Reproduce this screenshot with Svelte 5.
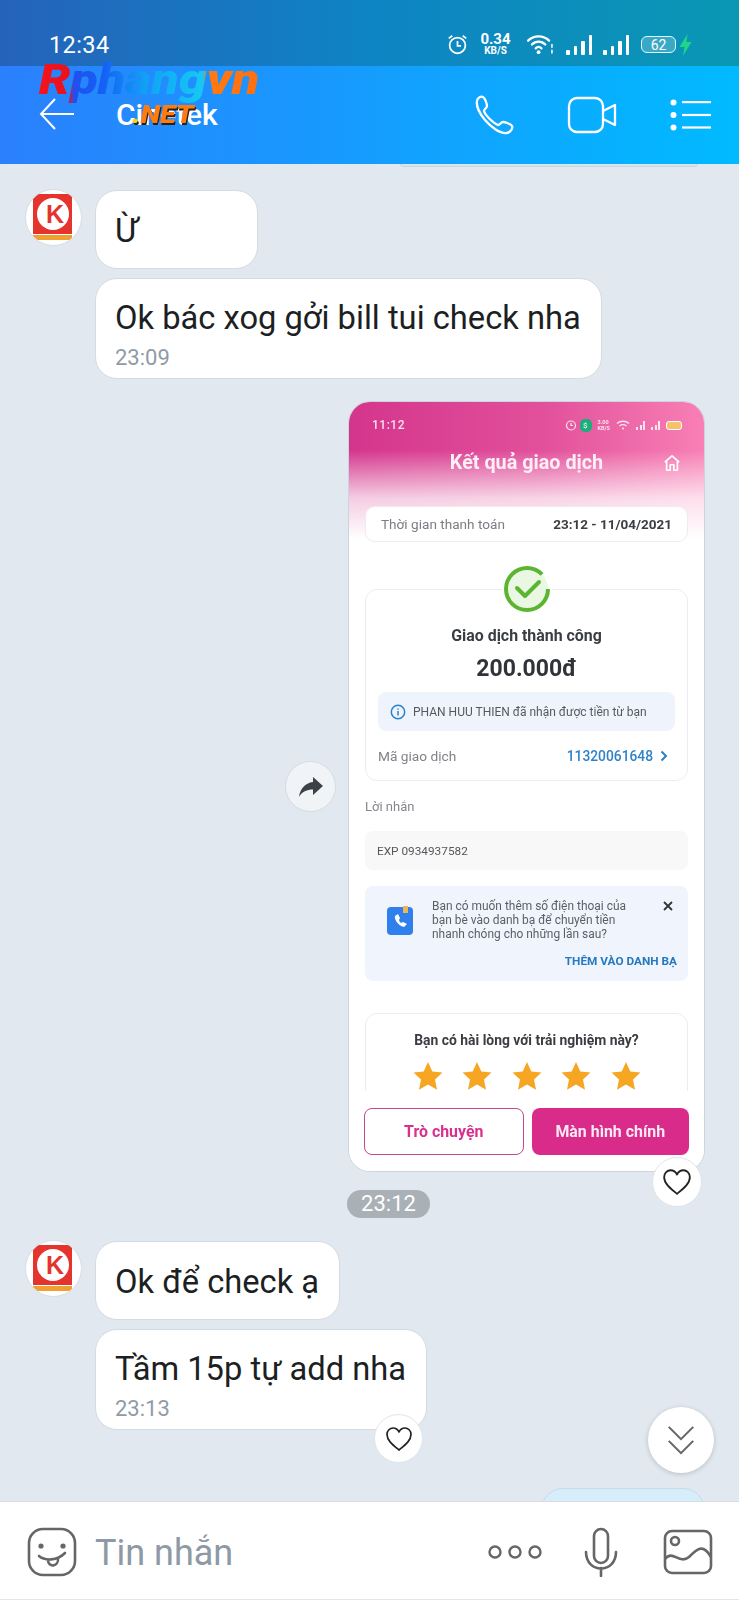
<script lang="ts">
	const stars = [0, 1, 2, 3, 4];
</script>

{#snippet avatar()}
	<div class="avatar">
		<svg viewBox="0 0 57 57" width="57" height="57">
			<rect x="8" y="5" width="39" height="40" fill="#e5342d" />
			<rect x="8" y="46" width="39" height="5" fill="#f0a030" />
			<circle cx="28" cy="25" r="16" fill="#fff" />
			<text x="30" y="34" class="logo-k">K</text>
		</svg>
	</div>
{/snippet}

{#snippet heart(size)}
	<svg viewBox="0 0 28 26" width={size} height={size} fill="none" stroke="#222" stroke-width="1.7" stroke-linejoin="round">
		<path d="M14 24 C8 19 2 14.5 2 8.5 C2 4.5 5 2 8 2 C10.5 2 12.8 3.4 14 6 C15.2 3.4 17.500 2 20 2 C23 2 26 4.500 26 8.500 C26 14.500 20 19 14 24Z" />
	</svg>
{/snippet}

<div class="phone">
	<div class="status">
		<span class="clock">12:34</span>
		<div class="status-icons">
			<svg viewBox="0 0 24 24" width="21" height="21" fill="none" stroke="#fff" stroke-width="2">
				<circle cx="12" cy="13" r="9" />
				<path d="M12 8 V13.500 H16 M2 5 L6 2 M22 5 L18 2" />
			</svg>
			<div class="speed"><b>0.34</b><small>KB/S</small></div>
			<svg class="wifi" viewBox="0 0 30 22" width="29" height="21" fill="none" stroke="#fff" stroke-width="2.400" stroke-linecap="round">
				<path d="M2 7 C8 1 18 1 24 7 M6 11 C10 7 16 7 20 11 M10 15 C12 13 14 13 16 15" />
				<circle cx="13" cy="19" r="2" fill="#fff" stroke="none" />
				<path d="M27 11 V14 M27 17 V20" stroke-width="1.600" />
			</svg>
			<div class="signal">
				<i style="height: 5px"></i><i style="height: 9px"></i><i style="height: 14px"></i><i style="height: 20px"></i>
			</div>
			<div class="signal">
				<i style="height: 5px"></i><i style="height: 9px"></i><i style="height: 14px"></i><i style="height: 20px"></i>
			</div>
			<div class="battery"><span>62</span></div>
			<svg class="bolt" viewBox="0 0 12 22" width="13" height="22"><path d="M8 0 L0 13 H5 L3.500 22 L12 8 H7Z" fill="#22d48a" /></svg>
		</div>
	</div>

	<header class="bar">
		<svg class="back" viewBox="0 0 36 32" width="36" height="32" fill="none" stroke="#fff" stroke-width="2">
			<path d="M35 16 H2 M16 1 L2 16 L16 31" />
		</svg>
		<h1>Cinetek</h1>
		<div class="bar-actions">
			<svg viewBox="0 0 40 40" width="40" height="40" fill="none" stroke="#fff" stroke-width="2.300" stroke-linejoin="round">
				<path d="M3 6 C3 3 7 1 9 2 C11 3 13 9 13 11 C13 13 10 14 10 16 C11 20 19 28 24 30 C26 30 27 27 29 27 C31 27 37 29 38 31 C39 33 37 37 33 38 C26 39 17 32 11 25 C6 19 2 11 3 6Z" />
			</svg>
			<svg viewBox="0 0 50 38" width="50" height="38" fill="none" stroke="#fff" stroke-width="2.300" stroke-linejoin="round">
				<rect x="2" y="2" width="34" height="34" rx="8" />
				<path d="M36 15 L48 9 V29 L36 23" />
			</svg>
			<svg viewBox="0 0 42 32" width="42" height="32" fill="#fff">
				<circle cx="3.500" cy="3.500" r="3" /><circle cx="3.500" cy="16" r="3" /><circle cx="3.500" cy="28.500" r="3" />
				<rect x="12" y="2" width="29" height="2.200" /><rect x="12" y="14.900" width="29" height="2.200" /><rect x="12" y="27.400" width="29" height="2.200" />
			</svg>
		</div>
	</header>

	<main class="chat">
		<div class="peek-top"></div>

		<div class="group first">
			{@render avatar()}
			<div class="stack">
				<div class="bubble short">Ừ</div>
				<div class="bubble">
					Ok bác xog gởi bill tui check nha
					<time>23:09</time>
				</div>
			</div>
		</div>

		<div class="sent">
			<button class="forward" aria-label="Chuyển tiếp">
				<svg viewBox="0 0 26 22" width="26" height="22"><path d="M15 1 L25 10 L15 19 V13.500 C9 13.500 4 15.500 1 21 C2 13 7 7 15 6Z" fill="#3c4148" /></svg>
			</button>
			<div class="shot">
				<div class="shot-inner">
					<div class="shot-hero">
						<div class="shot-status">
							<span>11:12</span>
							<div class="shot-status-icons">
								<svg viewBox="0 0 12 12" width="12" height="12" fill="none" stroke="#fbe4ef" stroke-width="1.200"><circle cx="6" cy="6.500" r="4.500" /><path d="M6 4 V6.500 H8" /></svg>
								<i class="shield">$</i>
								<small>3.00<br />KB/S</small>
								<svg viewBox="0 0 14 10" width="14" height="11" fill="none" stroke="#fbe4ef" stroke-width="1.300"><path d="M1 3 C4 0 10 0 13 3 M3.500 5.500 C5.500 4 8.500 4 10.500 5.500 M6 8 L8 8" /></svg>
								<div class="mini-signal"><i style="height: 3px"></i><i style="height: 5px"></i><i style="height: 9px"></i></div>
								<div class="mini-signal"><i style="height: 3px"></i><i style="height: 5px"></i><i style="height: 9px"></i></div>
								<i class="mini-batt"></i>
							</div>
						</div>
						<div class="shot-title">
							<span>Kết quả giao dịch</span>
							<svg viewBox="0 0 20 20" width="18" height="18" fill="none" stroke="#fff" stroke-width="1.800" stroke-linejoin="round"><path d="M2 9 L10 2 L18 9 M4 8 V18 H8 V12 H12 V18 H16 V8" /></svg>
						</div>
					</div>

					<div class="pay-time">
						<span>Thời gian thanh toán</span>
						<b>23:12 - 11/04/2021</b>
					</div>

					<section class="result">
						<div class="check">
							<svg viewBox="0 0 50 50" width="50" height="50" fill="none">
								<circle cx="25" cy="25" r="25" fill="#fff" />
								<circle cx="25" cy="25" r="21" fill="#eaf7e2" stroke="#5cb531" stroke-width="4" stroke-dasharray="115 17" />
								<path d="M15 24 L23 32 L37 18" stroke="#5cb531" stroke-width="4" stroke-linecap="round" stroke-linejoin="round" />
							</svg>
						</div>
						<h2>Giao dịch thành công</h2>
						<div class="amount">200.000đ</div>
						<div class="info">
							<svg viewBox="0 0 16 16" width="16" height="16" fill="none" stroke="#2b82c9" stroke-width="1.500"><circle cx="8" cy="8" r="6.700" /><path d="M8 7 V11.500 M8 4.500 V5.800" /></svg>
							<span>PHAN HUU THIEN đã nhận được tiền từ bạn</span>
						</div>
						<div class="txn">
							<span>Mã giao dịch</span>
							<a href="#txn">11320061648 <svg viewBox="0 0 8 12" width="8" height="12" fill="none" stroke="#2b7fc6" stroke-width="2"><path d="M1.500 1.500 L6 6 L1.500 10.500" /></svg></a>
						</div>
					</section>

					<div class="note-label">Lời nhắn</div>
					<div class="note">EXP 0934937582</div>

					<section class="contact">
						<svg class="book" viewBox="0 0 28 30" width="28" height="30">
							<rect x="1" y="1" width="26" height="28" rx="4" fill="#2f80ed" />
							<rect x="17" y="0" width="5" height="7" fill="#f2b35a" />
							<path d="M9 10 C8 13 12 20 18 21 L21 18 L17 16 L15 17 C14 16 13 15 13 14 L14 12 L12 8Z" fill="#fff" />
						</svg>
						<p>Bạn có muốn thêm số điện thoại của bạn bè vào danh bạ để chuyển tiền nhanh chóng cho những lần sau?</p>
						<svg class="close" viewBox="0 0 10 10" width="10" height="10" fill="none" stroke="#333" stroke-width="1.800"><path d="M1 1 L9 9 M9 1 L1 9" /></svg>
						<a href="#add">THÊM VÀO DANH BẠ</a>
					</section>

					<section class="rate">
						<h3>Bạn có hài lòng với trải nghiệm này?</h3>
						<div class="stars">
							{#each stars as s (s)}
								<svg viewBox="0 0 30 30" width="30" height="30"><path d="M15 1 L19.300 10.500 L29.500 11.600 L22 18.500 L24 28.700 L15 23.500 L6 28.700 L8 18.500 L0.500 11.600 L10.700 10.500Z" fill="#f6a623" /></svg>
							{/each}
						</div>
					</section>

					<div class="actions">
						<button class="ghost">Trò chuyện</button>
						<button class="solid">Màn hình chính</button>
					</div>
				</div>
				<div class="like like-big">{@render heart(30)}</div>
			</div>
		</div>

		<div class="chip">23:12</div>

		<div class="group">
			{@render avatar()}
			<div class="stack">
				<div class="bubble">Ok để check ạ</div>
				<div class="bubble last">
					Tầm 15p tự add nha
					<time>23:13</time>
					<div class="like">{@render heart(28)}</div>
				</div>
			</div>
		</div>

		<div class="peek-sent"></div>

		<button class="down" aria-label="Xuống cuối">
			<svg viewBox="0 0 32 34" width="28" height="30" fill="none" stroke="#666" stroke-width="2.400"><path d="M2 2 L16 16 L30 2 M2 18 L16 32 L30 18" /></svg>
		</button>
	</main>

	<footer class="composer">
		<svg viewBox="0 0 50 50" width="50" height="50" fill="none" stroke="#666" stroke-width="2.600" stroke-linecap="round">
			<rect x="2" y="2" width="46" height="46" rx="14" />
			<circle cx="14" cy="19" r="2.600" fill="#666" stroke="none" /><circle cx="36" cy="19" r="2.600" fill="#666" stroke="none" />
			<path d="M12 29 C18 34 30 34 38 26 M21 33 C21 41 32 40 31 31" />
		</svg>
		<span class="placeholder">Tin nhắn</span>
		<svg class="dots" viewBox="0 0 54 16" width="54" height="16" fill="none" stroke="#666" stroke-width="2.400">
			<circle cx="7" cy="8" r="5.500" /><circle cx="27" cy="8" r="5.500" /><circle cx="47" cy="8" r="5.500" />
		</svg>
		<svg class="mic" viewBox="0 0 34 50" width="34" height="50" fill="none" stroke="#666" stroke-width="2.600" stroke-linecap="round">
			<rect x="10" y="2" width="14" height="34" rx="7" />
			<path d="M2 25 C2 47 32 47 32 25 M17 41 V49" />
		</svg>
		<svg class="pic" viewBox="0 0 50 46" width="50" height="46" fill="none" stroke="#666" stroke-width="2.600">
			<rect x="2" y="2" width="46" height="42" rx="7" />
			<circle cx="12" cy="12" r="4" />
			<path d="M2 30 C10 20 16 36 26 28 C34 20 40 14 48 28" />
		</svg>
	</footer>

	<div class="watermark">
		<span class="wm-main">Rphangvn</span>
		<span class="wm-net"><em>.</em>NET</span>
	</div>
</div>

<style>
	:global(body) {
		margin: 0;
		background: #e2e8f0;
	}

	.phone {
		position: relative;
		width: 739px;
		height: 1600px;
		display: flex;
		flex-direction: column;
		overflow: hidden;
		font-family: Roboto, sans-serif;
		background: #e2e8f0;
		color: #1c1f23;
	}

	.status {
		height: 66px;
		flex: none;
		box-sizing: border-box;
		display: flex;
		justify-content: space-between;
		align-items: center;
		padding: 23px 47px 0 49px;
		background: linear-gradient(90deg, #2563bb, #0e84c4 50%, #0a97b4);
		color: #fff;
	}

	.clock {
		font-size: 23.500px;
		letter-spacing: 0.4px;
	}

	.status-icons {
		display: flex;
		align-items: center;
	}

	.speed {
		display: flex;
		flex-direction: column;
		align-items: center;
		line-height: 10px;
		margin: 0 14px 0 11px;
		width: 33px;
	}

	.speed b {
		font-size: 15px;
		line-height: 13px;
		font-weight: 700;
	}

	.speed small {
		font-size: 10px;
		font-weight: 700;
	}

	.signal {
		display: flex;
		align-items: flex-end;
		gap: 4px;
		height: 20px;
		margin-left: 11px;
	}

	.signal i {
		width: 3.500px;
		background: #fff;
		border-radius: 1px;
	}

	.battery {
		width: 35px;
		height: 17px;
		margin-left: 12px;
		box-sizing: border-box;
		border: 1.500px solid #dff;
		border-radius: 6px;
		background: rgba(255, 255, 255, 0.2);
		display: flex;
		align-items: center;
		justify-content: center;
		font-size: 14px;
		line-height: 1;
	}

	.bolt {
		margin-left: 3px;
	}

	.bar {
		height: 98px;
		flex: none;
		box-sizing: border-box;
		display: flex;
		align-items: center;
		padding: 0 27px 0 39px;
		background: linear-gradient(90deg, #2a80fd, #00baff);
		color: #fff;
		position: relative;
		z-index: 1;
		margin-bottom: -1px;
	}

	.back {
		margin-top: -3px;
	}

	.bar h1 {
		margin: -2px 0 0 41px;
		font-size: 30px;
		font-weight: 500;
	}

	.bar-actions {
		margin-left: auto;
		display: flex;
		align-items: center;
		gap: 53px;
	}

	.chat {
		flex: 1;
		position: relative;
		overflow: hidden;
		min-height: 0;
	}

	.peek-top {
		width: 296px;
		height: 3px;
		margin-left: 400px;
		background: #d5e6f1;
		border: 1px solid #c9d4dd;
		border-top: 0;
		border-radius: 0 0 10px 10px;
	}

	.group {
		display: flex;
		align-items: flex-start;
		gap: 13px;
		padding-left: 25px;
		margin-top: 22px;
	}

	.avatar {
		width: 57px;
		height: 57px;
		border-radius: 50%;
		background: #fff;
		border: 1px solid #d8dde3;
		box-sizing: border-box;
		overflow: hidden;
		flex: none;
		line-height: 0;
	}

	.avatar svg {
		margin: -1px;
	}

	.logo-k {
		font-family: "Liberation Sans", sans-serif;
		font-weight: 700;
		font-size: 25px;
		fill: #e5342d;
		text-anchor: middle;
	}

	.stack {
		display: flex;
		flex-direction: column;
		align-items: flex-start;
		gap: 9px;
		margin-top: 1px;
	}

	.bubble {
		position: relative;
		box-sizing: border-box;
		background: #fff;
		border: 1px solid #d5dbe2;
		border-radius: 22px;
		padding: 20px 20px 16px 19px;
		font-size: 32.700px;
		line-height: 41px;
		min-height: 79px;
	}

	.bubble.short {
		width: 163px;
	}

	.bubble time {
		display: block;
		font-size: 22px;
		line-height: 26px;
		color: #8f9ba6;
		margin-top: 6px;
	}

	.bubble:has(time) {
		padding: 19px 20px 7px 19px;
	}

	.like {
		position: absolute;
		right: 3px;
		bottom: -34px;
		width: 49px;
		height: 49px;
		border-radius: 50%;
		background: #fff;
		border: 1px solid #dfe4ea;
		box-sizing: border-box;
		display: flex;
		align-items: center;
		justify-content: center;
	}

	.like-big {
		bottom: -35px;
		width: 50px;
		height: 50px;
	}

	.sent {
		display: flex;
		justify-content: flex-end;
		align-items: center;
		gap: 12px;
		padding-right: 34px;
		margin-top: 22px;
	}

	.forward {
		width: 51px;
		height: 51px;
		border-radius: 50%;
		background: #f1f4f7;
		border: 1px solid #d5dbe2;
		padding: 0;
		display: flex;
		align-items: center;
		justify-content: center;
	}

	.shot {
		position: relative;
		width: 357px;
		height: 771px;
	}

	.shot-inner {
		height: 100%;
		box-sizing: border-box;
		background: #fff;
		border: 1px solid #c9d5df;
		border-radius: 22px;
		overflow: hidden;
		position: relative;
		font-family: Roboto, sans-serif;
		color: #3a3d42;
	}

	.shot-inner > :global(*) {
		filter: blur(0.6px);
	}

	.shot-hero {
		height: 137px;
		margin-bottom: -33px;
		background:
			linear-gradient(180deg, rgba(255, 255, 255, 0) 35%, rgba(255, 255, 255, 0.75) 70%, #fff 100%),
			linear-gradient(90deg, #d4358c, #e2509b 55%, #f880b5);
		color: #fff;
	}

	.shot-status {
		display: flex;
		justify-content: space-between;
		align-items: center;
		padding: 16px 22px 0 23px;
		font-size: 12px;
		line-height: 14px;
		font-weight: 500;
		letter-spacing: 0.5px;
		color: #f9e3ee;
	}

	.shot-status-icons {
		display: flex;
		align-items: center;
		gap: 6px;
	}

	.shot-status-icons small {
		font-size: 5.500px;
		line-height: 6px;
		font-weight: 700;
		letter-spacing: 0;
	}

	.shield {
		width: 12px;
		height: 13px;
		border-radius: 5px;
		background: #16b07c;
		font-size: 8px;
		font-style: normal;
		text-align: center;
		line-height: 13px;
		margin-left: -3px;
	}

	.mini-signal {
		display: flex;
		gap: 1.500px;
		align-items: flex-end;
		height: 9px;
	}

	.mini-signal i {
		width: 2px;
		background: #fbe4ef;
	}

	.mini-batt {
		width: 16px;
		height: 9px;
		border-radius: 3px;
		background: #f7c16a;
		border: 1px solid #fff;
		box-sizing: border-box;
	}

	.shot-title {
		position: relative;
		text-align: center;
		margin-top: 19px;
		font-size: 19.800px;
		line-height: 24px;
		font-weight: 700;
		color: #fdeef5;
	}

	.shot-title svg {
		position: absolute;
		right: 23px;
		top: 3px;
	}

	.pay-time {
		position: relative;
		margin: 0 16px;
		height: 36px;
		box-sizing: border-box;
		background: #fff;
		border: 1px solid #f1e9ee;
		border-radius: 10px;
		display: flex;
		justify-content: space-between;
		align-items: center;
		padding: 0 15px;
		font-size: 13.600px;
		color: #7a7d82;
	}

	.pay-time b {
		color: #3a3d42;
		font-size: 13.500px;
		font-weight: 700;
	}

	.result {
		position: relative;
		margin: 47px 16px 0;
		height: 192px;
		box-sizing: border-box;
		border: 1px solid #ececf0;
		border-radius: 12px;
		text-align: center;
		padding-top: 36px;
	}

	.check {
		position: absolute;
		left: 50%;
		top: -26px;
		transform: translateX(-50%);
		line-height: 0;
	}

	.result h2 {
		margin: 0;
		font-size: 15.900px;
		line-height: 20px;
		font-weight: 700;
	}

	.amount {
		font-size: 23px;
		line-height: 30px;
		font-weight: 700;
		margin-top: 8px;
		color: #303338;
	}

	.info {
		margin: 8px 12px 0;
		height: 39px;
		background: #eff4fc;
		border-radius: 8px;
		display: flex;
		align-items: center;
		gap: 7px;
		padding-left: 12px;
		font-size: 12px;
		color: #55595f;
	}

	.txn {
		display: flex;
		justify-content: space-between;
		align-items: center;
		margin: 17px 19px 0 12px;
		font-size: 13.700px;
		color: #808388;
	}

	.txn a {
		display: flex;
		align-items: center;
		gap: 7px;
		color: #2f82c7;
		text-decoration: none;
		font-size: 13.800px;
		font-weight: 500;
	}

	.note-label {
		margin: 17px 0 0 16px;
		font-size: 13px;
		line-height: 18px;
		color: #85888d;
	}

	.note {
		margin: 15px 16px 0;
		height: 39px;
		box-sizing: border-box;
		background: #f8f8f9;
		border-radius: 8px;
		display: flex;
		align-items: center;
		padding-left: 12px;
		font-size: 11.800px;
		color: #55585c;
	}

	.contact {
		position: relative;
		margin: 16px 16px 0;
		height: 95px;
		box-sizing: border-box;
		background: #f0f5fd;
		border-radius: 8px;
		padding: 13px 50px 0 67px;
		font-size: 11.950px;
		line-height: 14px;
		color: #5b5f65;
	}

	.contact p {
		margin: 0;
	}

	.book {
		position: absolute;
		left: 21px;
		top: 20px;
	}

	.close {
		position: absolute;
		right: 15px;
		top: 15px;
	}

	.contact a {
		position: absolute;
		right: 11px;
		bottom: 13px;
		font-size: 11.800px;
		font-weight: 700;
		color: #2579c0;
		text-decoration: none;
	}

	.rate {
		margin: 32px 16px 0;
		height: 120px;
		box-sizing: border-box;
		border: 1px solid #ececf0;
		border-radius: 12px;
		text-align: center;
		padding-top: 17px;
	}

	.rate h3 {
		margin: 0;
		font-size: 13.900px;
		line-height: 18px;
		font-weight: 700;
	}

	.stars {
		display: flex;
		justify-content: center;
		gap: 19.500px;
		margin-top: 12px;
	}

	.actions {
		position: absolute;
		left: 0;
		right: 0;
		bottom: 0;
		height: 80px;
		box-sizing: border-box;
		background: #fff;
		display: flex;
		gap: 8px;
		padding: 17px 15px 0;
	}

	.actions button {
		flex: 1;
		height: 47px;
		border-radius: 8px;
		font-family: inherit;
		font-size: 15.900px;
		font-weight: 700;
	}

	.ghost {
		background: #fff;
		border: 1px solid #c04a8a;
		color: #d8308e;
	}

	.solid {
		background: #d92c8a;
		border: 0;
		color: #fbe8f2;
	}

	.chip {
		width: 83px;
		height: 28px;
		margin: 18px 0 0 347px;
		border-radius: 14px;
		background: #a9b0b6;
		color: #fff;
		font-size: 22px;
		line-height: 28px;
		text-align: center;
	}

	.peek-sent {
		width: 164px;
		height: 70px;
		margin: 58px 0 0 541px;
		border-radius: 22px;
		background: #d6edfb;
		border: 1px solid #c8dbe8;
		box-sizing: border-box;
	}

	.down {
		position: absolute;
		left: 648px;
		top: 1244px;
		width: 66px;
		height: 66px;
		border-radius: 50%;
		border: 0;
		padding: 0;
		background: #fff;
		box-shadow: 0 1px 5px rgba(0, 0, 0, 0.18);
		display: flex;
		align-items: center;
		justify-content: center;
	}

	.composer {
		height: 99px;
		flex: none;
		box-sizing: border-box;
		background: #fff;
		border-top: 1px solid #d9dde2;
		border-bottom: 1px solid #e2e5e9;
		display: flex;
		align-items: center;
		padding: 2px 26px 0 27px;
		position: relative;
		z-index: 1;
	}

	.placeholder {
		margin-left: 18px;
		font-size: 36px;
		color: #8d9aa6;
		margin-top: 2px;
	}

	.dots {
		margin-left: auto;
	}

	.mic {
		margin-left: 42px;
	}

	.pic {
		margin-left: 45px;
	}

	.watermark {
		position: absolute;
		left: 37px;
		top: 56px;
		width: 224px;
		text-align: center;
		z-index: 2;
		font-family: Roboto, sans-serif;
		font-weight: 900;
		font-style: italic;
	}

	.wm-main {
		display: block;
		font-size: 42px;
		line-height: 48px;
		transform: scaleX(1.195);
		background: linear-gradient(90deg, #ff1418 0%, #e8121e 20%, #2050ef 22%, #1560f5 33%, #10a0f5 48%, #16c8f5 70%, #ff7a10 72%, #ff6a10 100%);
		-webkit-background-clip: text;
		background-clip: text;
		color: transparent;
	}

	.wm-net {
		position: absolute;
		left: 99px;
		top: 46px;
		font-size: 25px;
		line-height: 26px;
		color: #ff7a10;
		text-shadow: 1px 2px 0 #222;
		transform: scaleX(1.15);
	}

	.wm-net em {
		color: #ffd400;
	}
</style>
